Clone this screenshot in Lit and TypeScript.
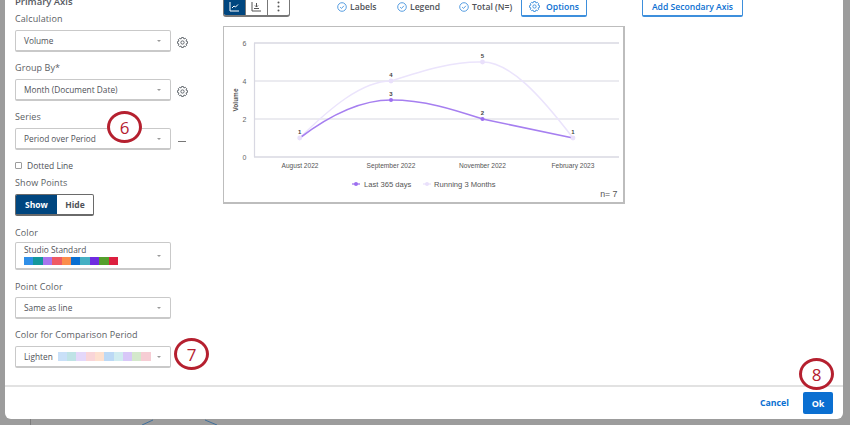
import { LitElement, html, css, svg } from "lit";
import { customElement } from "lit/decorators.js";

const strong = ["#2f8fe8","#13979c","#a875ee","#ef5a64","#fb8d4b","#0a6fd1","#45b0c3","#6f2ce0","#559f2c","#dc1f3f"];
const light = ["#c9e0f8","#bfe3e6","#e4d8fa","#f9d5d8","#fde0cf","#bcd9f5","#d0ecf0","#d8c8f8","#d4e8cc","#f6cdd4"];

// Eight-toothed cog outline, computed so the teeth stay evenly spaced.
const cogPath = (() => {
  const pts: string[] = [];
  const teeth = 8;
  for (let i = 0; i < teeth; i++) {
    const a = (i / teeth) * Math.PI * 2;
    const step = (Math.PI * 2) / teeth;
    [[8.2, -0.5], [11, -0.24], [11, 0.24], [8.2, 0.5]].forEach(([r, f]) => {
      const t = a + f * step;
      pts.push(`${(12 + r * Math.cos(t)).toFixed(2)} ${(12 + r * Math.sin(t)).toFixed(2)}`);
    });
  }
  return "M" + pts.join("L") + "Z";
})();

const gear = (size = 11, color = "#5a5f66") => html`<svg class="gear" width=${size} height=${size} viewBox="0 0 24 24" fill="none" stroke=${color} stroke-width="2" stroke-linejoin="round"><path d=${cogPath}/><circle cx="12" cy="12" r="3.6"/></svg>`;

const check = () => html`<svg width="10" height="10" viewBox="0 0 14 14" fill="none" stroke="#3d8fdc" stroke-width="1.2"><circle cx="7" cy="7" r="6"/><path d="M4.4 7.2l1.9 1.8 3.4-3.7"/></svg>`;

@customElement("app-root")
export class AppRoot extends LitElement {
  static styles = css`
    :host { display: block; width: 850px; height: 425px; overflow: hidden; position: relative; background: #9c9c9c; font-family: "Open Sans", "Noto Sans", sans-serif; color: #4f5258; }
    .behind { position: absolute; left: 0; top: 0; }
    .modal { position: relative; box-sizing: border-box; width: 838px; height: 419px; margin-left: 5px; background: #fff; border-radius: 0 0 6px 6px; display: flex; flex-direction: column; overflow: hidden; }
    .body { flex: 1; min-height: 0; display: flex; border-bottom: 2px solid #e2e2e2; }
    .left { width: 218px; box-sizing: border-box; padding: 0 0 0 10px; margin-top: -5px; display: flex; flex-direction: column; }
    .heading { font-size: 9.5px; font-weight: 600; line-height: 13px; color: #55585e; margin-bottom: 5px; }
    .label { font-size: 9px; line-height: 12px; height: 12px; letter-spacing: .1px; color: #5b5e64; margin-bottom: 5px; }
    .label.near { margin-bottom: 3px; }
    .label.mid { margin-bottom: 4px; }
    .row { display: flex; align-items: center; gap: 3px; margin-bottom: 10px; }
    .row.tight { margin-bottom: 9px; }
    .row.wide { margin-bottom: 11px; }
    .select { width: 156px; box-sizing: border-box; height: 22px; border: 1px solid #c9c9c9; border-bottom-width: 2px; border-radius: 2px; display: flex; align-items: center; padding: 0 9px 0 8px; font-size: 8.3px; color: #4f5258; position: relative; }
    .select .text { flex: 1; white-space: nowrap; }
    .caret { width: 0; height: 0; border-left: 2px solid transparent; border-right: 2px solid transparent; border-top: 2px solid #9a9a9a; flex: none; }
    .tall { height: 28px; }
    .tall .stack { flex: 1; display: flex; flex-direction: column; gap: 2px; margin-top: -2px; }
    .tall .stack span { line-height: 11px; }
    .swatches { display: flex; }
    .swatches i { display: block; width: 9.4px; height: 8px; }
    .swatches.light { margin-left: 5px; flex: 1; }
    .swatches.light i { width: 9.3px; height: 9px; }
    .icon-slot { width: 16px; display: flex; justify-content: center; margin-top: 2px; }
    .dash { width: 8px; height: 1px; background: #777; margin-top: 3px; }
    .check-row { display: flex; align-items: center; gap: 5px; height: 12px; margin-bottom: 6px; font-size: 8.5px; }
    .box { width: 5px; height: 5px; border: 1px solid #9c9c9c; border-radius: 1px; }
    .toggle { display: flex; width: 79px; height: 22px; box-sizing: border-box; border: 1px solid #6a6a6a; border-bottom-width: 2px; border-radius: 2px; overflow: hidden; margin-bottom: 11px; font-size: 8.5px; font-weight: 700; }
    .toggle span { display: flex; align-items: center; justify-content: center; }
    .toggle .on { width: 41px; background: #00467f; color: #fff; }
    .toggle .off { flex: 1; color: #4f5258; }
    .right { flex: 1; min-width: 0; display: flex; flex-direction: column; }
    .toolbar { display: flex; align-items: center; height: 26px; margin-top: -9px; margin-bottom: 9px; }
    .tools { display: flex; width: 67px; height: 26px; box-sizing: border-box; border: 1px solid #777; border-bottom-width: 2px; border-radius: 0 0 3px 3px; overflow: hidden; }
    .tools span { flex: 1; display: flex; align-items: center; justify-content: center; padding-top: 5px; border-left: 1px solid #777; }
    .tools span:first-child { background: #00467f; border-left: 0; }
    .opts { display: flex; align-items: center; font-size: 8.6px; font-weight: 600; color: #4f5258; margin: 6px 0 0 47px; }
    .opt { display: flex; align-items: center; gap: 3px; white-space: nowrap; }
    .opt.w60 { width: 60px; }
    .opt.w62 { width: 62px; }
    .options, .secondary { display: flex; align-items: center; justify-content: center; box-sizing: border-box; height: 26px; border: 1px solid #3d8fdc; border-bottom-width: 2px; border-radius: 0 0 2px 2px; color: #0a6fd1; font-size: 8.6px; font-weight: 600; padding-top: 6px; white-space: nowrap; }
    .options { gap: 6px; width: 66px; }
    .secondary { width: 101px; margin-left: 55px; }
    .chart-box { width: 402px; height: 178px; box-sizing: border-box; border: 1px solid #bdbdbd; border-bottom-width: 2px; border-right-width: 2px; }
    .chart { display: block; }
    .chart text { font-family: "Liberation Sans", Arial, sans-serif; }
    .footer { height: 32px; flex: none; display: flex; align-items: center; justify-content: flex-end; gap: 14px; padding: 0 10px 0 0; }
    .cancel { color: #0a6fd1; font-size: 8.8px; font-weight: 700; }
    .ok { width: 30px; height: 22px; border-radius: 2px; background: #0a6fd1; color: #fff; font-size: 9px; font-weight: 700; display: flex; align-items: center; justify-content: center; }
    .call { position: absolute; box-sizing: border-box; width: 35px; height: 32px; border: 3px solid #b5202f; border-radius: 50%; background: #fff; color: #b5202f; font-size: 17px; line-height: 1; display: flex; align-items: center; justify-content: center; }
    .call.a { left: 107px; top: 111px; }
    .call.b { left: 174px; top: 338px; }
    .call.c { left: 799px; top: 358px; }
  `;

  private select(text: string) {
    return html`<div class="select"><span class="text">${text}</span><span class="caret"></span></div>`;
  }

  private chart() {
    const xs = [299.7, 391, 482.5, 573];
    const y = (v: number) => 157 - v * 19;
    const grid = [6, 4, 2, 0];
    return html`<div class="chart-box"><svg class="chart" width="399" height="175" viewBox="224 27 399 175">
      ${grid.map((v) => svg`
        <line x1="254" x2="619" y1=${y(v)} y2=${y(v)} stroke="#d8d8e2" stroke-width=${v === 0 || v === 6 ? 1.6 : 1.2}></line>
        <text x="244.5" y=${y(v) + 2.5} font-size="7" fill="#666" text-anchor="middle">${v}</text>`)}
      <line x1="254.5" x2="254.5" y1="43" y2="157" stroke="#d8d8e2" stroke-width="1.2"></line>
      <text transform="translate(238 100) rotate(-90)" font-size="6.5" font-weight="700" fill="#555" text-anchor="middle">Volume</text>
      <path d="M299.7 138 C330 108 362 81 391 81 C425 70 455 61 482.5 62 C510 62 540 95 573 138" fill="none" stroke="#ebe4fc" stroke-width="1.5"></path>
      <path d="M299.7 138 C330 115 360 100 391 100 C425 100 455 110 482.5 119 L573 138" fill="none" stroke="#a67ff0" stroke-width="1.6"></path>
      ${[138, 81, 62, 138].map((cy, i) => svg`<circle cx=${xs[i]} cy=${cy} r="2.4" fill="#e9e0fb"></circle>`)}
      ${[100, 119].map((cy, i) => svg`<circle cx=${xs[i + 1]} cy=${cy} r="2" fill="#9c6ff0"></circle>`)}
      ${[[299.7, 134, "1"], [391, 77, "4"], [391, 96, "3"], [482.5, 58, "5"], [482.5, 115, "2"], [573, 134, "1"]].map(([x, yy, t]) => svg`<text x=${x} y=${yy} font-size="6" font-weight="700" fill="#444" text-anchor="middle">${t}</text>`)}
      ${[["August 2022", 300], ["September 2022", 391], ["November 2022", 482.5], ["February 2023", 573]].map(([t, x]) => svg`<text x=${x} y="167.5" font-size="6.6" fill="#555" text-anchor="middle">${t}</text>`)}
      <line x1="352" x2="360" y1="184" y2="184" stroke="#a67ff0" stroke-width="1.4"></line>
      <circle cx="356" cy="184" r="2" fill="#9c6ff0"></circle>
      <text x="364" y="186.5" font-size="7.6" fill="#555">Last 365 days</text>
      <line x1="423" x2="431" y1="184" y2="184" stroke="#ebe4fc" stroke-width="1.4"></line>
      <circle cx="427" cy="184" r="2" fill="#e9e0fb"></circle>
      <text x="434" y="186.5" font-size="7.6" fill="#555">Running 3 Months</text>
      <text x="617.5" y="196.5" font-size="8.8" fill="#555" text-anchor="end">n= 7</text>
    </svg></div>`;
  }

  render() {
    return html`
      <svg class="behind" width="850" height="425" fill="none">
        <line x1="30.5" x2="30.5" y1="419" y2="425" stroke="#7d7d7d"></line>
        <path d="M142 425l11-5M205 420l12 5" stroke="#3f6f9c" stroke-width="1"></path>
      </svg>
      <div class="modal">
        <div class="body">
          <div class="left">
            <div class="heading">Primary Axis</div>
            <div class="label">Calculation</div>
            <div class="row">${this.select("Volume")}<span class="icon-slot">${gear()}</span></div>
            <div class="label">Group By*</div>
            <div class="row">${this.select("Month (Document Date)")}<span class="icon-slot">${gear()}</span></div>
            <div class="label">Series</div>
            <div class="row tight">${this.select("Period over Period")}<span class="icon-slot"><span class="dash"></span></span></div>
            <div class="check-row"><span class="box"></span>Dotted Line</div>
            <div class="label">Show Points</div>
            <div class="toggle"><span class="on">Show</span><span class="off">Hide</span></div>
            <div class="label near">Color</div>
            <div class="row wide">
              <div class="select tall">
                <div class="stack"><span>Studio Standard</span>
                  <div class="swatches">${strong.map((c) => html`<i style="background:${c}"></i>`)}</div>
                </div>
                <span class="caret"></span>
              </div>
            </div>
            <div class="label mid">Point Color</div>
            <div class="row">${this.select("Same as line")}</div>
            <div class="label">Color for Comparison Period</div>
            <div class="row">
              <div class="select">
                <span>Lighten</span>
                <div class="swatches light">${light.map((c) => html`<i style="background:${c}"></i>`)}</div>
                <span class="caret"></span>
              </div>
            </div>
          </div>
          <div class="right">
            <div class="toolbar">
              <div class="tools">
                <span><svg width="11" height="11" viewBox="0 0 11 11" fill="none" stroke="#fff" stroke-width="1"><path d="M1 1v9h9M3 7l2-2 1.5 1L9 3.5"/></svg></span>
                <span><svg width="11" height="11" viewBox="0 0 11 11" fill="none" stroke="#555" stroke-width="1"><path d="M1 1v9h9M3 7.5h5M5.5 2v4M4 4.5l1.5 1.5L7 4.5"/></svg></span>
                <span><svg width="3" height="11" viewBox="0 0 3 11" fill="#555"><circle cx="1.5" cy="1.5" r="1"/><circle cx="1.5" cy="5.5" r="1"/><circle cx="1.5" cy="9.5" r="1"/></svg></span>
              </div>
              <div class="opts">
                <span class="opt w60">${check()}Labels</span>
                <span class="opt w62">${check()}Legend</span>
                <span class="opt w62">${check()}Total (N=)</span>
              </div>
              <div class="options">${gear(11, "#3d8fdc")}Options</div>
              <div class="secondary">Add Secondary Axis</div>
            </div>
            ${this.chart()}
          </div>
        </div>
        <div class="footer"><span class="cancel">Cancel</span><span class="ok">Ok</span></div>
      </div>
      <div class="call a">6</div>
      <div class="call b">7</div>
      <div class="call c">8</div>
    `;
  }
}
